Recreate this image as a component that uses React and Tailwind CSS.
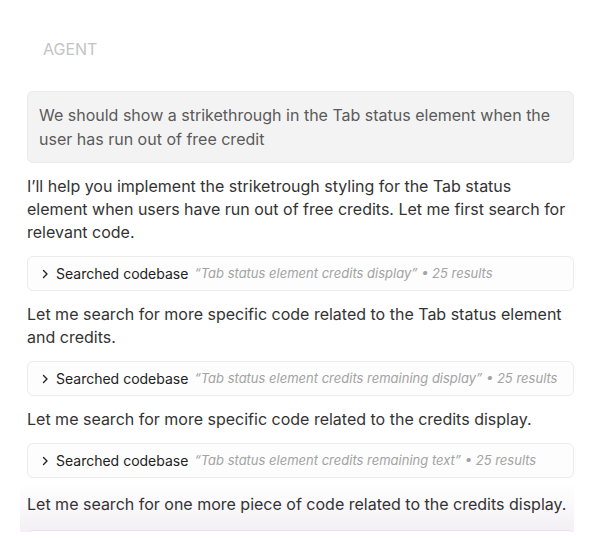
const searches = [
  'Tab status element credits display',
  'Tab status element credits remaining display',
  'Tab status element credits remaining text',
]

const Chevron = () => (
  <svg width="10" height="10" viewBox="0 0 10 10" className="shrink-0 text-[#222]">
    <path d="M3.5 1.5 L7 5 L3.5 8.5" fill="none" stroke="currentColor" strokeWidth="1.4" strokeLinecap="round" strokeLinejoin="round" />
  </svg>
)

const SearchRow = ({ query }) => (
  <div className="flex items-center h-[35px] rounded-md border border-[#ececec] bg-[#fdfdfd] pl-[12px] gap-[6px] whitespace-nowrap">
    <Chevron />
    <span className="text-[14px] text-[#222]">Searched codebase</span>
    <span className="text-[13px] italic text-[#a3a3a3]">“{query}” • 25 results</span>
  </div>
)

const Para = ({ children }) => (
  <p className="text-[16px] leading-[23px] text-[#333]">{children}</p>
)

export default function App() {
  return (
    <div className="w-[590px] h-[556px] bg-white font-['Inter','Liberation_Sans',sans-serif] antialiased">
      <div className="h-[532px] w-[574px] overflow-hidden pl-[27px] pt-[39px]">
        <div className="pl-[16px] text-[16px] leading-[20px] text-[#c4c4c4]">AGENT</div>

        <div className="mt-[32px] flex flex-col gap-[12px]">
          <div className="rounded-md border border-[#ebebeb] bg-[#f3f3f3] px-[11px] py-[11px] text-[16px] leading-[24px] text-[#5a5a5a]">
            We should show a strikethrough in the Tab status element when the user has run out of free credit
          </div>

          <Para>
            I’ll help you implement the striketrough styling for the Tab status element when users have run out of free credits. Let me first search for relevant code.
          </Para>

          <SearchRow query={searches[0]} />

          <Para>
            Let me search for more specific code related to the Tab status element and credits.
          </Para>

          <SearchRow query={searches[1]} />

          <Para>Let me search for more specific code related to the credits display.</Para>

          <SearchRow query={searches[2]} />

          <div className="-ml-[7px] -mt-[6px] pl-[7px] pt-[9px] bg-gradient-to-b from-white to-[#ebe5ee]">
            <Para>Let me search for one more piece of code related to the credits display.</Para>
            <div className="mt-[14px] h-[35px] rounded-md border border-[#e4e4e4] bg-white" />
          </div>
        </div>
      </div>
    </div>
  )
}
